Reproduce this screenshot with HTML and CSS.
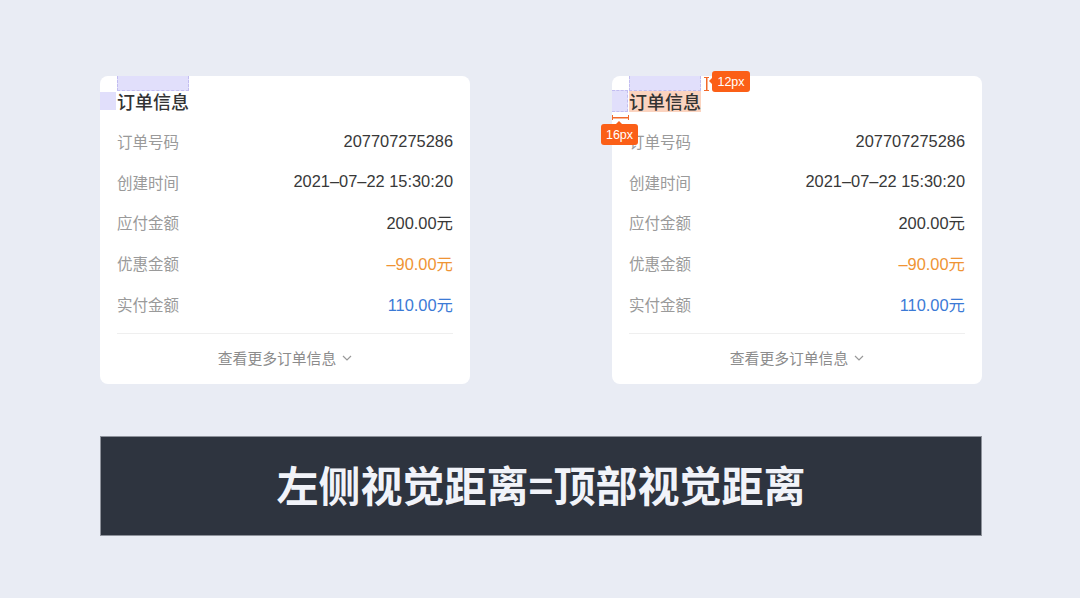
FILE: index.html
```html
<!DOCTYPE html>
<html lang="zh-CN">
<head>
<meta charset="utf-8">
<title>订单信息</title>
<link rel="stylesheet" href="styles.css">
</head>
<body>
<div class="page">
  <div class="cards">
    <section class="card">
      <div class="ann-top"></div>
      <div class="ann-left"></div>
      <h2 class="title">订单信息</h2>
      <div class="rows">
        <div class="row"><span class="label">订单号码</span><span class="value">207707275286</span></div>
        <div class="row"><span class="label">创建时间</span><span class="value">2021–07–22 15:30:20</span></div>
        <div class="row"><span class="label">应付金额</span><span class="value">200.00元</span></div>
        <div class="row"><span class="label">优惠金额</span><span class="value orange">–90.00元</span></div>
        <div class="row"><span class="label">实付金额</span><span class="value blue">110.00元</span></div>
      </div>
      <div class="more">查看更多订单信息
        <svg class="chev" width="10" height="6" viewBox="0 0 10 6"><path d="M1 1 L5 5 L9 1" fill="none" stroke="#999" stroke-width="1.2"/></svg>
      </div>
    </section>

    <section class="card">
      <div class="ann-top dashed"></div>
      <div class="ann-left dashed tall"></div>
      <div class="vmark"></div>
      <div class="badge badge-12">12px</div>
      <div class="hmark"></div>
      <div class="badge badge-16">16px</div>
      <h2 class="title"><span class="hl">订单信息</span></h2>
      <div class="rows">
        <div class="row"><span class="label">订单号码</span><span class="value">207707275286</span></div>
        <div class="row"><span class="label">创建时间</span><span class="value">2021–07–22 15:30:20</span></div>
        <div class="row"><span class="label">应付金额</span><span class="value">200.00元</span></div>
        <div class="row"><span class="label">优惠金额</span><span class="value orange">–90.00元</span></div>
        <div class="row"><span class="label">实付金额</span><span class="value blue">110.00元</span></div>
      </div>
      <div class="more">查看更多订单信息
        <svg class="chev" width="10" height="6" viewBox="0 0 10 6"><path d="M1 1 L5 5 L9 1" fill="none" stroke="#999" stroke-width="1.2"/></svg>
      </div>
    </section>
  </div>

  <div class="banner">左侧视觉距离=顶部视觉距离</div>
</div>
</body>
</html>
```

FILE: styles.css
```css
* { box-sizing: border-box; }
html, body { margin: 0; padding: 0; }
body {
  background: #e9ecf4;
  font-family: "Liberation Sans", "Noto Sans CJK SC", sans-serif;
  width: 1080px;
  height: 598px;
  overflow: hidden;
}
.page {
  padding: 76px 98px 0 100px;
}
.cards {
  display: flex;
  gap: 142px;
}
.card {
  position: relative;
  width: 370px;
  height: 308px;
  background: #fff;
  border-radius: 8px;
  padding: 14px 17px 0 17px;
  display: flex;
  flex-direction: column;
}
.title {
  margin: 0;
  font-family: "Noto Sans CJK SC", sans-serif;
  font-size: 18px;
  font-weight: 500;
  color: #333;
  line-height: 22px;
  height: 22px;
}
.hl {
  display: inline-block;
  background: #fbd3bf;
  height: 22px;
  width: 72px;
}
.rows {
  margin-top: 9px;
  display: flex;
  flex-direction: column;
}
.row {
  height: 40.6px;
  display: flex;
  justify-content: space-between;
  align-items: center;
  font-size: 16.4px;
}
.label {
  font-family: "Noto Sans CJK SC", sans-serif;
  color: #9a9a9a;
  font-size: 15.5px;
}
.value { color: #383838; }
.value.orange { color: #ef9434; }
.value.blue { color: #3b7ad6; }
.more {
  margin-top: 9px;
  border-top: 1px solid #efefef;
  flex: 1;
  display: flex;
  align-items: center;
  justify-content: center;
  gap: 6px;
  font-family: "Noto Sans CJK SC", sans-serif;
  font-size: 14.8px;
  color: #8c8c8c;
  padding-bottom: 2px;
}
.chev { margin-top: 1px; }

/* annotation overlays */
.ann-top {
  position: absolute;
  left: 17px;
  top: 0;
  width: 72px;
  height: 15px;
  background: #e1dffb;
  border: 1px dashed #c2bdf0;
  border-top: none;
}
.ann-left {
  position: absolute;
  left: 0;
  top: 16px;
  width: 16px;
  height: 18px;
  background: #e1dffb;
}
.ann-left.dashed { border: 1px dashed #c2bdf0; border-left: none; }
.ann-left.tall { top: 14px; height: 22px; }
.vmark {
  position: absolute;
  left: 92px;
  top: 1px;
  width: 5px;
  height: 14px;
  border-top: 1.5px solid #f26a2a;
  border-bottom: 1.5px solid #f26a2a;
  background: linear-gradient(#f26a2a, #f26a2a) center / 1.5px 100% no-repeat;
}
.hmark {
  position: absolute;
  left: 0;
  top: 39px;
  width: 17px;
  height: 5px;
  border-left: 1.5px solid #f26a2a;
  border-right: 1.5px solid #f26a2a;
  background: linear-gradient(#f26a2a, #f26a2a) center / 100% 1.5px no-repeat;
}
.badge {
  position: absolute;
  background: #fb5f17;
  color: #fff;
  font-family: "Liberation Sans", sans-serif;
  font-size: 12.5px;
  border-radius: 3px;
  display: flex;
  align-items: center;
  justify-content: center;
  height: 21px;
}
.badge::before {
  content: "";
  position: absolute;
  border: 4px solid transparent;
}
.badge-12 {
  left: 100px;
  top: -5px;
  width: 38px;
}
.badge-12::before {
  left: -7px;
  top: 6px;
  border-right: 4px solid #fb5f17;
}
.badge-16 {
  left: -11px;
  top: 48px;
  width: 37px;
}
.badge-16::before {
  left: 14px;
  top: -7px;
  border-bottom: 4px solid #fb5f17;
}

.banner {
  margin-top: 52px;
  width: 882px;
  height: 100px;
  background: #2e343f;
  border: 1px solid #8e929b;
  display: flex;
  align-items: center;
  justify-content: center;
  color: #f1f3f9;
  font-family: "Noto Sans CJK SC", sans-serif;
  font-weight: 700;
  font-size: 42px;
  letter-spacing: 0;
  padding-bottom: 6px;
}
```
